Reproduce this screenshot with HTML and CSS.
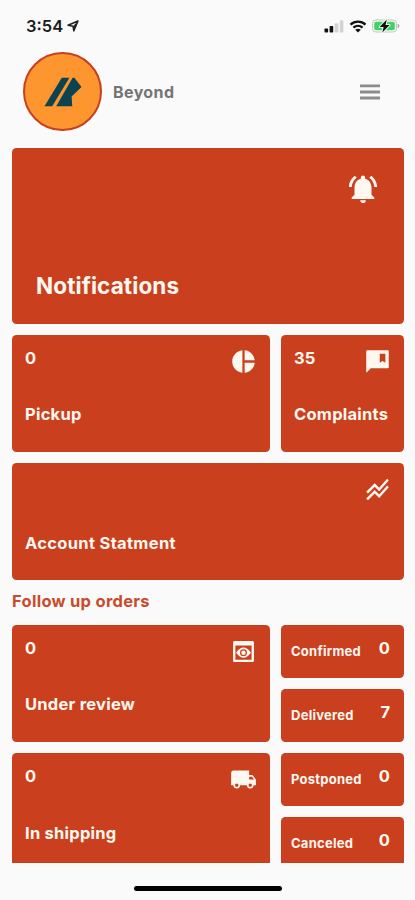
FILE: index.html
```html
<!DOCTYPE html>
<html lang="en">

<head>
    <meta charset="UTF-8">
    <meta name="viewport" content="width=device-width, initial-scale=1.0">
    <title>Beyond</title>
    <link rel="stylesheet" href="styles.css">
</head>

<body>
    <div class="screen">
        <!-- status bar -->
        <div class="statusBar">
            <span class="time">3:54</span>
            <svg class="locationIcon" width="12" height="12" viewBox="0 0 12 12">
                <path d="M1 5.2L11 1L6.8 11L6 6.2Z" fill="none" stroke="#222" stroke-width="1.5" stroke-linejoin="round" />
                <path d="M6 6.2L11 1L6.8 11Z" fill="#222" />
            </svg>
            <svg class="signalIcon" width="20" height="13" viewBox="0 0 20 13">
                <rect x="0.5" y="8.5" width="3.6" height="4" rx="0.8" fill="#111" />
                <rect x="5.6" y="6" width="3.6" height="6.5" rx="0.8" fill="#111" />
                <rect x="10.7" y="3.2" width="3.6" height="9.3" rx="0.8" fill="#d2d2d2" />
                <rect x="15.8" y="0.3" width="3.6" height="12.2" rx="0.8" fill="#d2d2d2" />
            </svg>
            <svg class="wifiIcon" width="18" height="13" viewBox="0 0 18 13">
                <path d="M1.5 4.6C5.8 0.6 12.2 0.6 16.5 4.6M4.4 7.7C7.1 5.2 10.9 5.2 13.6 7.7" fill="none" stroke="#111" stroke-width="2.3" />
                <path d="M6.2 9.8Q9 7.6 11.8 9.8L9 12.6Z" fill="#111" />
            </svg>
            <svg class="batteryIcon" width="28" height="14" viewBox="0 0 28 14">
                <rect x="0.5" y="1" width="24" height="12" rx="3.4" fill="#fafafa" stroke="#c2c6c2" />
                <rect x="2.2" y="2.7" width="20.6" height="8.6" rx="2" fill="#3fd364" />
                <path d="M25.7 4.8Q27.4 5.4 27.4 7T25.7 9.2Z" fill="#a5a8a5" />
                <path d="M14.8 0.6L7.6 7.9H11.6L10.4 13.4L17.6 6.1H13.6Z" fill="#111" stroke="#eafbea" stroke-width="2" stroke-linejoin="round" paint-order="stroke" />
            </svg>
        </div>

        <!-- logo, name and menu -->
        <div class="header">
            <div class="avatar">
                <svg width="38" height="30" viewBox="0 0 38 30">
                    <path d="M17.8 0.7H25.4L8.2 29.3H0.5Z" fill="#0c4350" />
                    <path d="M28.6 0.7H30.4L37.5 10L27.6 19.5L28.3 29.3H12.2Z" fill="#0c4350" />
                </svg>
            </div>
            <div class="userName">Beyond</div>
            <svg class="menuIcon" width="20" height="16" viewBox="0 0 20 16">
                <path d="M0 1.9H20M0 8H20M0 14H20" stroke="#8c8c8c" stroke-width="2.8" />
            </svg>
        </div>

        <!-- scrolling list -->
        <div class="content">
            <div class="card bigCard">
                <svg class="bellIcon" width="34" height="34" viewBox="0 0 24 24">
                    <path d="M7.58 4.08L6.15 2.65C3.75 4.48 2.17 7.3 2.03 10.5h2c.15-2.65 1.51-4.97 3.55-6.42zm12.39 6.42h2c-.15-3.2-1.73-6.02-4.12-7.85l-1.42 1.43c2.02 1.45 3.39 3.77 3.54 6.42zM18 11c0-3.07-1.64-5.64-4.5-6.32V4c0-.83-.67-1.5-1.5-1.5s-1.5.67-1.5 1.5v.68C7.63 5.36 6 7.92 6 11v5l-2 2v1h16v-1l-2-2v-5zm-6 11c.14 0 .27-.01.4-.04.65-.14 1.18-.58 1.44-1.18.1-.24.15-.5.15-.78h-4c.01 1.1.9 2 2.01 2z" />
                </svg>
                <div class="bigTitle">Notifications</div>
            </div>

            <div class="row">
                <div class="card">
                    <div class="cardTop">
                        <span class="count">0</span>
                        <svg class="icon" viewBox="0 0 24 24">
                            <path d="M11 2v20c-5.07-.5-9-4.79-9-10s3.93-9.5 9-10zm2.03 0v8.99H22c-.47-4.74-4.24-8.52-8.97-8.99zm0 11.01V22c4.74-.47 8.5-4.25 8.97-8.99h-8.97z" />
                        </svg>
                    </div>
                    <div class="title">Pickup</div>
                </div>
                <div class="card">
                    <div class="cardTop">
                        <span class="count">35</span>
                        <svg class="icon" viewBox="0 0 24 24">
                            <path d="M21 2H3c-.6 0-1 .4-1 1v19l4-4h15c.6 0 1-.4 1-1V3c0-.6-.4-1-1-1zm-2 11l-2.500-1.500L14 13V5h5v8z" />
                        </svg>
                    </div>
                    <div class="title">Complaints</div>
                </div>
            </div>

            <div class="card">
                <div class="cardTop">
                    <span class="count"></span>
                    <svg class="icon" viewBox="0 0 24 24">
                        <path d="M2 19.990l7.500-7.510 4 4 7.090-7.970L22 9.920l-8.500 9.560-4-4-6 6.010L2 19.990zm1.500-4.500l6-6.010 4 4L22 3.920l-1.410-1.410-7.090 7.970-4-4L2 13.990l1.500 1.500z" />
                    </svg>
                </div>
                <div class="title statement">Account Statment</div>
            </div>

            <div class="sectionTitle">Follow up orders</div>

            <div class="row">
                <div class="column">
                    <div class="card">
                        <div class="cardTop">
                            <span class="count">0</span>
                            <svg class="icon" viewBox="0 0 24 24">
                                <path fill-rule="evenodd" d="M4 2.600H20Q21.300 2.600 21.300 4V20Q21.300 21.400 20 21.400H4Q2.700 21.400 2.700 20V4Q2.700 2.600 4 2.600ZM4.800 6.600V19.400H19.200V6.600Z" />
                                <path fill-rule="evenodd" d="M5.400 13Q12 4 18.600 13Q12 22 5.400 13ZM12 9.900A3.100 3.100 0 1 0 12 16.100A3.100 3.100 0 1 0 12 9.900Z" />
                                <circle cx="12" cy="13" r="2" />
                            </svg>
                        </div>
                        <div class="title">Under review</div>
                    </div>
                    <div class="card">
                        <div class="cardTop">
                            <span class="count">0</span>
                            <svg class="icon" viewBox="0 0 24 24">
                                <path d="M20 8h-3V4H3c-1.100 0-2 .9-2 2v11h2c0 1.660 1.340 3 3 3s3-1.340 3-3h6c0 1.660 1.340 3 3 3s3-1.340 3-3h2v-5l-3-4zM6 18.500c-.83 0-1.500-.67-1.500-1.500s.67-1.500 1.500-1.500 1.500.67 1.500 1.500-.67 1.500-1.500 1.500zm13.500-9l1.960 2.500H17V9.500h2.500zm-1.500 9c-.83 0-1.500-.67-1.500-1.500s.67-1.500 1.500-1.500 1.500.67 1.500 1.500-.67 1.500-1.500 1.500z" />
                            </svg>
                        </div>
                        <div class="title">In shipping</div>
                    </div>
                </div>
                <div class="column">
                    <div class="card smallCard">
                        <span class="smallTitle">Confirmed</span>
                        <span class="count">0</span>
                    </div>
                    <div class="card smallCard">
                        <span class="smallTitle">Delivered</span>
                        <span class="count">7</span>
                    </div>
                    <div class="card smallCard">
                        <span class="smallTitle">Postponed</span>
                        <span class="count">0</span>
                    </div>
                    <div class="card smallCard">
                        <span class="smallTitle">Canceled</span>
                        <span class="count">0</span>
                    </div>
                </div>
            </div>
        </div>

        <!-- home indicator -->
        <div class="homeBar"></div>
    </div>
</body>

</html>
```
FILE: styles.css
```css
* {
    margin: 0;
    padding: 0;
    box-sizing: border-box;
}

body {
    background: #fafafa;
    font-family: Inter, "Liberation Sans", sans-serif;
    font-weight: 700;
}

svg {
    display: block;
    flex: none;
}

.screen {
    width: 415px;
    height: 900px;
    overflow: hidden;
    display: flex;
    flex-direction: column;
}

.statusBar {
    height: 52px;
    padding: 0 15px 0 26px;
    display: flex;
    align-items: center;
}

.time {
    font-size: 16.5px;
    font-weight: 600;
    line-height: 20px;
    color: #1c1c1c;
}

.locationIcon {
    margin-left: 4px;
}

.signalIcon {
    margin-left: auto;
}

.wifiIcon {
    margin-left: 5px;
}

.batteryIcon {
    margin-left: 5px;
}

.header {
    height: 96.4px;
    padding: 0 35px 17px 23px;
    display: flex;
    align-items: center;
}

.avatar {
    width: 79px;
    height: 79px;
    border: 2px solid #c83f20;
    border-radius: 50%;
    background: #fd962e;
    display: flex;
    align-items: center;
    justify-content: center;
}

.userName {
    margin-left: 11px;
    font-size: 16px;
    line-height: 20px;
    letter-spacing: 0.4px;
    color: #757575;
}

.menuIcon {
    margin-left: auto;
}

.content {
    height: 714.4px;
    padding: 0 11px 0 12px;
    overflow: hidden;
    display: flex;
    flex-direction: column;
    gap: 11.3px;
}

.card {
    height: 117px;
    flex: none;
    padding: 13px;
    border-radius: 4.5px;
    background: #ca401e;
    color: #fff8f0;
    fill: #fff8f0;
}

.bigCard {
    height: 175.2px;
    padding: 23.5px 24px 0;
}

.bellIcon {
    margin-left: auto;
}

.bigTitle {
    margin-top: 65px;
    font-size: 22.5px;
    line-height: 30px;
    letter-spacing: 0.1px;
}

.row {
    flex: none;
    display: grid;
    grid-template-columns: 257.5px 1fr;
    gap: 11.5px;
}

.column {
    display: flex;
    flex-direction: column;
    gap: 11.3px;
}

.cardTop {
    height: 27px;
    display: flex;
    justify-content: space-between;
}

.count {
    font-size: 16.5px;
    line-height: 20px;
}

.icon {
    width: 27px;
    height: 27px;
}

.title {
    margin-top: 29.5px;
    font-size: 16.5px;
    line-height: 20px;
    letter-spacing: 0.25px;
    white-space: nowrap;
}

.statement {
    margin-top: 30px;
    letter-spacing: 0.32px;
}

.sectionTitle {
    height: 22px;
    flex: none;
    font-size: 16.5px;
    line-height: 21px;
    letter-spacing: 0.28px;
    color: #ca4a2c;
}

.smallCard {
    height: 52.85px;
    padding: 13px 14px 0 10px;
    display: flex;
    justify-content: space-between;
}

.smallTitle {
    padding-top: 3px;
    font-size: 13px;
    line-height: 20px;
    letter-spacing: 0.25px;
}

.homeBar {
    width: 148px;
    height: 5px;
    margin: 23.2px auto 0;
    border-radius: 3px;
    background: #000;
}
```
